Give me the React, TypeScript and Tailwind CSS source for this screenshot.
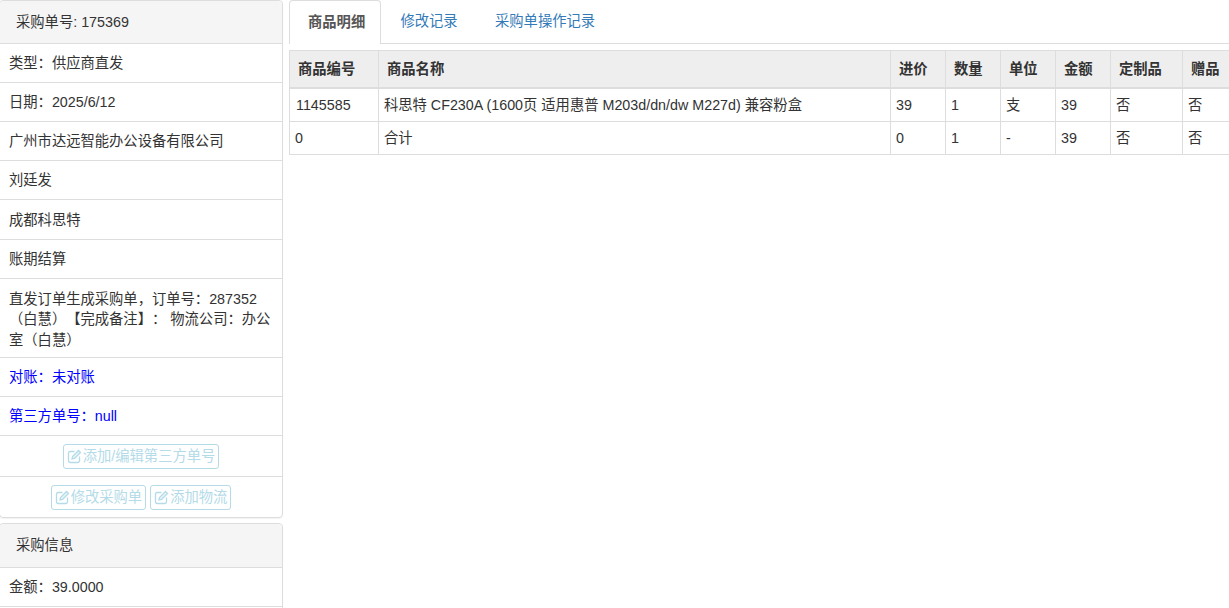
import React from "react";

const EditIcon = () => (
  <svg width="15" height="15" viewBox="0 0 15 15" fill="none" stroke="#b4dbe8" strokeWidth="1.3" className="shrink-0">
    <path d="M7.5 2.5H3.2A1.7 1.7 0 0 0 1.5 4.2v7.6a1.7 1.7 0 0 0 1.7 1.7h7.6a1.7 1.7 0 0 0 1.7-1.7V7.5" />
    <path d="M5.6 7.4 11.5 1.5l2 2-5.9 5.9-2.6.6z" fill="#e6f3f7" />
  </svg>
);

const Row = ({ children, className = "pt-[9px] pb-[9px] leading-[20px]" }: { children: React.ReactNode; className?: string }) => (
  <div className={`border-b border-[#ddd] px-[9px] ${className}`}>{children}</div>
);

const Btn = ({ children }: { children: React.ReactNode }) => (
  <span className="inline-flex h-[25px] items-center rounded-[3px] border border-[#b5dbe6] px-[3px] leading-[18px] text-[#b4dbe8]">
    <EditIcon />
    <span className="ml-[1px]">{children}</span>
  </span>
);

const Th = ({ children }: { children: React.ReactNode }) => (
  <th className="border border-b-2 border-[#ddd] bg-[#eee] px-2 py-[8px] text-left font-bold leading-[20px] text-[#333]">{children}</th>
);
const Td = ({ children, className = "px-[5px]" }: { children: React.ReactNode; className?: string }) => (
  <td className={`border border-[#ddd] py-[5px] leading-[22px] text-[#333] ${className}`}>{children}</td>
);

export default function App() {
  const widths = [89, 512, 55, 55, 55, 55, 72, 55];
  return (
    <div className="flex h-[608px] w-[1229px] overflow-hidden bg-white text-[14.3px] text-[#333] [font-family:'Liberation_Sans','Noto_Sans_CJK_SC',sans-serif] [text-spacing-trim:space-all]">
      <div className="ml-[-1px] w-[284px] shrink-0">
        <div className="rounded-[4px] border border-[#ddd] shadow-[0_1px_1px_rgba(0,0,0,0.05)]">
          <div className="rounded-t-[4px] border-b border-[#ddd] bg-[#f5f5f5] py-[11px] pl-[16px] leading-[20px]">采购单号: 175369</div>
          <Row>类型：供应商直发</Row>
          <Row>日期：2025/6/12</Row>
          <Row>广州市达远智能办公设备有限公司</Row>
          <Row>刘廷发</Row>
          <Row className="pt-[9.5px] pb-[9.5px] leading-[20px]">成都科思特</Row>
          <Row>账期结算</Row>
          <Row className="pt-[9.5px] pb-[7px] leading-[20.5px]">直发订单生成采购单，订单号：287352（白慧）【完成备注】： 物流公司：办公室（白慧）</Row>
          <Row className="pt-[9px] pb-[9px] leading-[20px] text-[#0000ff]">对账：未对账</Row>
          <Row className="pt-[9px] pb-[9px] leading-[20px] text-[#0000ff]">第三方单号：null</Row>
          <div className="flex h-[41px] items-center justify-center border-b border-[#ddd]">
            <Btn>添加/编辑第三方单号</Btn>
          </div>
          <div className="flex h-[40px] items-center justify-center gap-[4px]">
            <Btn>修改采购单</Btn>
            <Btn>添加物流</Btn>
          </div>
        </div>
        <div className="mt-[5px] rounded-[4px] border border-[#ddd] shadow-[0_1px_1px_rgba(0,0,0,0.05)]">
          <div className="rounded-t-[4px] border-b border-[#ddd] bg-[#f5f5f5] py-[11px] pl-[16px] leading-[21px]">采购信息</div>
          <Row>金额：39.0000</Row>
          <Row>&nbsp;</Row>
        </div>
      </div>
      <div className="ml-[6px] min-w-0 flex-1">
        <div className="flex h-[44px] border-b border-[#ddd]">
          <div className="h-[44px] w-[92px] rounded-t-[4px] border border-b-0 border-[#ddd] bg-white pl-[18px] font-bold leading-[43px] text-[#555]">商品明细</div>
          <div className="w-[96px] text-center leading-[43px] text-[#337ab7]">修改记录</div>
          <div className="px-[18px] leading-[43px] text-[#337ab7]">采购单操作记录</div>
        </div>
        <table className="mt-[6px] w-[948px] table-fixed border-collapse">
          <colgroup>
            {widths.map((w, i) => (
              <col key={i} style={{ width: w }} />
            ))}
          </colgroup>
          <thead>
            <tr>
              {["商品编号", "商品名称", "进价", "数量", "单位", "金额", "定制品", "赠品"].map((h) => (
                <Th key={h}>{h}</Th>
              ))}
            </tr>
          </thead>
          <tbody>
            <tr>
              {["1145585", "科思特 CF230A (1600页 适用惠普 M203d/dn/dw M227d) 兼容粉盒", "39", "1", "支", "39", "否", "否"].map((c, i) => (
                <Td key={i} className={i === 0 ? "pl-[6px] pr-[5px]" : "px-[5px]"}>{c}</Td>
              ))}
            </tr>
            <tr>
              {["0", "合计", "0", "1", "-", "39", "否", "否"].map((c, i) => (
                <Td key={i}>{c}</Td>
              ))}
            </tr>
          </tbody>
        </table>
      </div>
    </div>
  );
}
